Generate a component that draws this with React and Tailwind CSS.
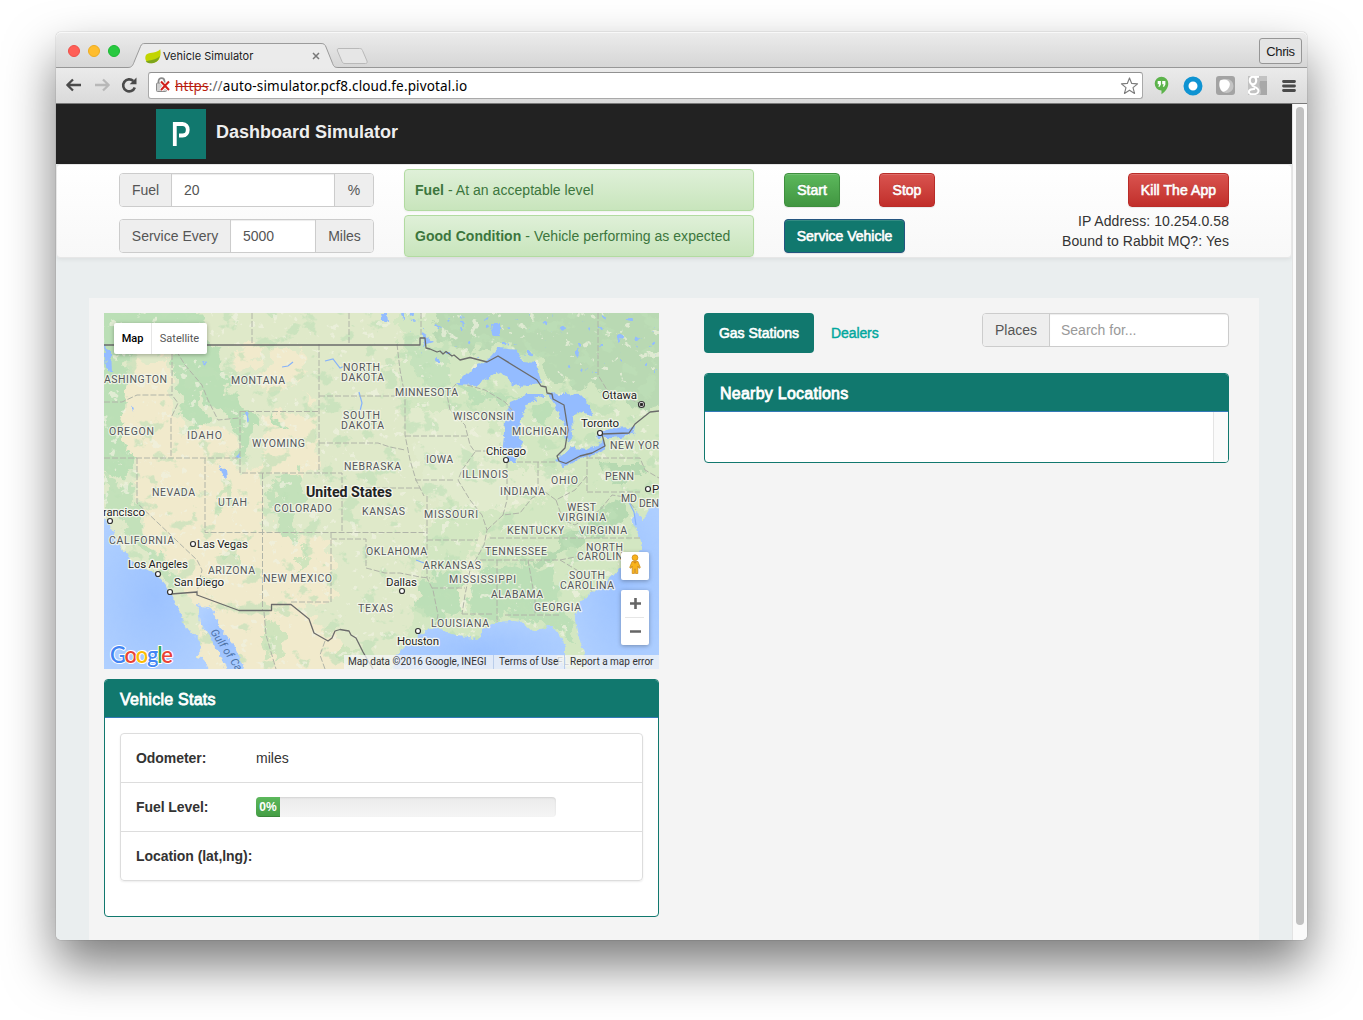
import React from "react";

const STATE_LABELS = [
  ["ASHINGTON", 104, 383, 63], ["MONTANA", 231, 384, 54], ["NORTH", 343, 371, 37], ["DAKOTA", 341, 381, 43],
  ["SOUTH", 343, 419, 37], ["DAKOTA", 341, 429, 43], ["OREGON", 109, 435, 45], ["IDAHO", 187, 439, 35],
  ["WYOMING", 252, 447, 53], ["NEBRASKA", 344, 470, 57], ["NEVADA", 152, 496, 43], ["UTAH", 218, 506, 29],
  ["COLORADO", 274, 512, 58], ["KANSAS", 362, 515, 43], ["CALIFORNIA", 109, 544, 65], ["ARIZONA", 208, 574, 47],
  ["NEW MEXICO", 263, 582, 69], ["OKLAHOMA", 366, 555, 61], ["TEXAS", 358, 612, 35], ["MINNESOTA", 395, 396, 63],
  ["WISCONSIN", 453, 420, 61], ["MICHIGAN", 512, 435, 55], ["IOWA", 426, 463, 27], ["ILLINOIS", 462, 478, 46],
  ["OHIO", 551, 484, 27], ["PENN", 605, 480, 29], ["NEW YOR", 610, 449, 49], ["INDIANA", 500, 495, 45],
  ["MISSOURI", 424, 518, 54], ["WEST", 567, 511, 29], ["VIRGINIA", 558, 521, 48], ["KENTUCKY", 507, 534, 57],
  ["VIRGINIA", 579, 534, 48], ["TENNESSEE", 485, 555, 62], ["NORTH", 586, 551, 37], ["CAROLIN", 577, 560, 46],
  ["ARKANSAS", 423, 569, 58], ["MISSISSIPPI", 449, 583, 67], ["SOUTH", 569, 579, 36], ["CAROLINA", 560, 589, 54],
  ["ALABAMA", 491, 598, 52], ["GEORGIA", 534, 611, 47], ["LOUISIANA", 431, 627, 58], ["MD", 621, 502, 16],
  ["DEN", 639, 507, 20], ["FL", 557, 665, 12],
];

const CITY_LABELS = [
  ["Ottawa", 602, 399, 35], ["Toronto", 581, 427, 38], ["Chicago", 486, 455, 40], ["Dallas", 386, 586, 31],
  ["Houston", 397, 645, 42], ["Las Vegas", 197, 548, 51], ["Los Angeles", 128, 568, 60], ["San Diego", 174, 586, 50],
  ["rancisco", 103, 516, 42], ["P", 652, 493, 7],
];

const CITY_DOTS = [
  [600, 433], [506, 460], [402, 591], [418, 631], [193, 544], [158, 574], [170, 592], [110, 521], [648, 489],
];

const STATE_LINES = [
  "M252 313V344", "M349 313V344", "M172 354V395", "M104 402L122 402L137 395H172L178 403L171 418V458",
  "M104 458H240", "M137 458V503L197 560L202 570L197 592", "M205 458V532.5H427", "M240 411V473H342V532.5",
  "M240 411.500H319", "M319 344V473", "M172 344L185 365L202 385L208 400L218 420L239 418", "M319 396H404",
  "M319 443H378L390 447L405 450", "M262.500 473V610", "M331 532V602H291", "M331 539H366V568L385 573L400 573L420 577L430 578",
  "M397 344L400 370L405 396V435L410 460L416 480L424 496", "M405 436H467", "M456 384L447 395L450 410L465 425L470 445L475 452L462 470L458 480L470 500L482 515L487 530L484 545L470 570L465 595L462 614",
  "M475 451H503", "M507 462V500L503 515", "M538 462V490", "M517 462H555", "M415 480H455", "M427 496V578L433 590L438 615L435 628",
  "M342 488H420", "M427 540H478", "M490 538H640", "M480 560H560L580 556", "M497 560V622", "M528 560L535 600V615", "M505 615H560",
  "M432 588H465", "M462 614H492", "M587 453V492", "M587 458H640L645 470L659 478", "M587 492H640", "M598 313V375L607 390L625 396L640 404",
  "M487 530L503 515L520 513L532 498L545 492L556 500L575 490L587 476", "M556 500L563 520L575 525L600 510L612 495L625 497L636 510",
  "M560 560L580 572L592 592", "M421 313V338", "M467 385L485 390L505 402L512 410", "M264 612L266 635L276 669", "M325 641L320 655L325 669",
];

function MapArt() {
  return (
    <svg viewBox="104 313 555 356" className="block h-[356px] w-[555px]" fontFamily="Roboto, sans-serif">
      <defs>
        <filter id="rough" x="-5%" y="-5%" width="110%" height="110%" colorInterpolationFilters="sRGB">
          <feTurbulence type="fractalNoise" baseFrequency="0.07" numOctaves="4" seed="4" result="n" />
          <feDisplacementMap in="SourceGraphic" in2="n" scale="26" xChannelSelector="R" yChannelSelector="G" />
        </filter>
        <filter id="coast" x="-5%" y="-5%" width="110%" height="110%" colorInterpolationFilters="sRGB">
          <feTurbulence type="fractalNoise" baseFrequency="0.16" numOctaves="3" seed="9" result="n" />
          <feDisplacementMap in="SourceGraphic" in2="n" scale="7" xChannelSelector="R" yChannelSelector="G" />
        </filter>
        <filter id="speckle" x="0" y="0" width="100%" height="100%" colorInterpolationFilters="sRGB">
          <feTurbulence type="fractalNoise" baseFrequency="0.05 0.06" numOctaves="5" seed="12" result="n" />
          <feColorMatrix in="n" type="matrix" values="0 0 0 0 0.75  0 0 0 0 0.88  0 0 0 0 0.72  14 0 0 0 -8.5" result="m" />
          <feComposite in="m" in2="SourceAlpha" operator="in" />
        </filter>
        <filter id="pale" x="0" y="0" width="100%" height="100%" colorInterpolationFilters="sRGB">
          <feTurbulence type="fractalNoise" baseFrequency="0.1" numOctaves="4" seed="31" result="n" />
          <feColorMatrix in="n" type="matrix" values="0 0 0 0 0.94  0 0 0 0 0.95  0 0 0 0 0.88  0 16 0 0 -10.9" result="m" />
          <feComposite in="m" in2="SourceAlpha" operator="in" />
        </filter>
        <filter id="lakes" x="0" y="0" width="100%" height="100%" colorInterpolationFilters="sRGB">
          <feTurbulence type="fractalNoise" baseFrequency="0.12" numOctaves="3" seed="77" result="n" />
          <feColorMatrix in="n" type="matrix" values="0 0 0 0 0.58  0 0 0 0 0.74  0 0 0 0 0.99  0 0 22 0 -16" result="m" />
          <feComposite in="m" in2="SourceAlpha" operator="in" />
        </filter>
        <radialGradient id="ocean" cx="0.5" cy="0.5" r="0.6">
          <stop offset="0" stopColor="#9cc2ff" />
          <stop offset="1" stopColor="#b0d0ff" />
        </radialGradient>
      </defs>
      <rect x="104" y="313" width="555" height="356" fill="#dfe9c9" />
      <g filter="url(#rough)">
        <path fill="#d3e7c2" d="M400 300H680V690H380L420 600L425 540L440 500L400 400Z" />
        <path fill="#e1ebcd" d="M405 410L470 410L500 430V470L560 470L580 470L540 500L500 510L430 500Z" />
        <path fill="#f1eacc" d="M134 362L168 360L172 400L180 432L212 424L236 434L238 478L265 462L262 418L285 412L316 418L318 470L262 478L265 532L332 535L332 600L300 608L345 645L345 690L190 690L200 610L186 585L150 545L138 500L135 460L120 440L122 400Z" />
        <path fill="#f1eacc" d="M230 346L265 344L252 372L234 368ZM268 355L300 348L306 375L295 386L262 390ZM300 392L318 400L308 410Z" />
        <path fill="#bbdfb6" d="M92 300H185L205 320L192 345L140 352L128 365L122 440L140 465L110 480L90 440Z" />
        <path fill="#bbdfb6" d="M175 340L222 345L228 390L248 410L240 425L222 412L210 405L204 385L200 400L205 420L192 432L180 415L185 395L174 375Z" />
        <path fill="#bbdfb6" d="M242 405L256 412L254 440L242 460L238 440ZM272 412L286 422L290 432L278 428Z" />
        <path fill="#c3e1ba" d="M104 475L132 485L138 520L160 560L178 582L172 590L150 562L128 530L106 505Z" />
        <path fill="#c3e1ba" d="M282 475L300 470L306 500L292 515L300 545L288 535L272 515L268 490Z" />
        <path fill="#cfe4bd" d="M222 485L230 490L224 515L216 510ZM225 552L238 560L250 572L236 570ZM266 615L278 622L284 650L276 669L266 640ZM345 645L360 650L352 669L338 660ZM300 545L308 560L300 575Z" />
        <path fill="#b9d9b3" d="M440 300H680V395L650 412L610 400L596 385L575 388L552 380L540 355L500 342L470 352L430 335Z" />
        <path fill="#c5e2bc" d="M400 340L450 350L450 390L420 385Z" />
        <path fill="#bcdfb7" d="M455 385L490 392L520 393L505 405L490 402L470 400ZM532 405L550 408L548 428L535 422Z" />
        <path fill="#bcdfb7" d="M425 575L462 570L464 610L430 622L418 600ZM475 572L520 562L555 575L560 605L535 620L500 615L472 618L470 600Z" />
        <path fill="#bcdfb7" d="M535 618L560 612L575 625L578 645L566 640L550 625Z" />
        <path fill="#b6d9b1" d="M525 562L560 545L600 512L622 498L630 515L600 535L570 550L540 566ZM600 462L640 462L645 478L612 484Z" />
        <path fill="#e3ebcc" d="M475 530L487 535L478 560L470 600L458 615L462 580Z" />
      </g>
      <rect x="104" y="313" width="555" height="356" filter="url(#speckle)" opacity="0.6" />
      <rect x="104" y="313" width="555" height="356" filter="url(#pale)" opacity="0.7" />
      <rect x="405" y="313" width="254" height="60" filter="url(#lakes)" />
      <g filter="url(#coast)" fill="url(#ocean)">
        <path d="M94 514L104 518L113 532L121 547L128 557L142 568L155 573L165 585L171 595L178 608L187 628L200 642L203 648L195 657L203 658L215 680H94Z" />
        <path d="M197 605L207 607L215 613L220 628L233 645L250 680H230L220 655L210 637L200 622Z" />
        <path d="M390 680L397 655L405 647L417 637L430 628L440 628L447 633L467 637L480 638L483 630L493 623L513 622L523 623L533 632L550 625L560 635L565 648L565 658L570 680Z" />
        <path d="M590 680L583 648L577 632L575 618L580 602L593 592L613 575L622 565L637 557L642 548L638 535L633 518L637 510L643 522L647 512L653 502L670 492V680Z" />
      </g>
      <g filter="url(#coast)" fill="#94bcff">
        <path d="M456 384L467 373L490 357L498 348L518 350L523 362L537 363L541 383L527 385L513 387L507 377L497 372L477 385Z" />
        <path d="M547 395L530 402L522 415L518 432L522 445L517 462L508 462L503 445L505 422L510 402L527 395Z" />
        <path d="M547 393L580 395L590 405L593 417L580 412L572 418L573 435L567 442L562 422L555 405Z" />
        <path d="M555 460L573 448L587 450L603 442L605 448L580 460L562 467Z" />
        <path d="M597 435L610 428L635 427L633 435L613 438L598 438Z" />
        <path d="M491 323L500 323V336L492 336ZM104 345L111 352L112 372L106 368ZM219 464L226 470L227 478L222 474ZM380 313H387L388 322L382 320ZM236 457L239 453L240 460ZM203 360L206 362L205 367ZM131 405L134 407L133 412ZM245 411L249 419L248 422L244 415ZM421 332L428 337L434 342L424 345ZM400 312H404V320Z" />
      </g>
      <g fill="none" stroke="#86b2fa" strokeWidth="1.200">
        <path d="M282 367L288 366L293 362M325 361L333 359L340 368L345 366M359 392L362 403L360 411M628 500L634 512L636 525M416 560L424 563" />
      </g>
      <g fill="none" stroke="#b0b4a8" strokeWidth="1" strokeDasharray="6 2">
        {STATE_LINES.map((d) => <path key={d} d={d} />)}
      </g>
      <g fill="none" stroke="#6b6b6b" strokeWidth="1.300" strokeLinejoin="round">
        <path d="M104 345H420V338H425L426 348L430 349L437 352L440 351L443 354L446 351.500L452 356L454 355L460 360L470 357.500L487 362L498 356L537 380L541 386L546 387L547 393L552 394L553 399L564 405L568 430L565 448L557 456L559 461L566 463.500L580 456L592 453L605 446L602 434L629 433L635 424L650 412L659 411" />
        <path d="M171 594L197 592V595L239 610.500H271.500V604.500H291L309 619L314 633L328 641L332 638L335 631L340 629.500L349 631L351 635L356 638L363 652L373 669" />
      </g>
      <g fontSize="10.500" fill="#55575a" stroke="#f4f6ec" strokeOpacity="0.85" strokeWidth="2.400" strokeLinejoin="round" paintOrder="stroke">
        {STATE_LABELS.map(([t, x, y, w]) => (
          <text key={t + x + y} x={x} y={y} textLength={w}>{t}</text>
        ))}
      </g>
      <g fill="#fff" stroke="#333" strokeWidth="1.200">
        {CITY_DOTS.map(([x, y]) => <circle key={x} cx={x} cy={y} r="2.500" />)}
        <circle cx="641.500" cy="404.500" r="3" />
        <circle cx="641.500" cy="404.500" r="1.200" fill="#222" />
      </g>
      <g fontSize="11.500" fill="#222" stroke="#f7f8f0" strokeOpacity="0.9" strokeWidth="2.600" strokeLinejoin="round" paintOrder="stroke">
        {CITY_LABELS.map(([t, x, y, w]) => (
          <text key={t} x={x} y={y} textLength={w}>{t}</text>
        ))}
        <text x="306" y="497" fontSize="14" fontWeight="700" textLength="86" lengthAdjust="spacingAndGlyphs">United States</text>
      </g>
      <text transform="translate(210 632) rotate(56)" fontSize="11" fill="#4f74a8" fontStyle="italic" textLength="48">Gulf of Ca</text>
      <text x="110" y="662.500" fontSize="22" fontFamily="Lato, sans-serif" fontWeight="600" textLength="63" stroke="#fff" strokeWidth="2" strokeLinejoin="round" paintOrder="stroke">
        <tspan fill="#4285f4">G</tspan><tspan fill="#ea4335">o</tspan><tspan fill="#fbbc05">o</tspan><tspan fill="#4285f4">g</tspan><tspan fill="#34a853">l</tspan><tspan fill="#ea4335">e</tspan>
      </text>
    </svg>
  );
}

function MapPanel() {
  return (
    <div className="relative h-[356px] w-[555px] overflow-hidden font-[Roboto,sans-serif]">
      <MapArt />
      <div className="absolute left-[10px] top-[10px] flex h-[31px] w-[93px] items-center rounded-[2px] bg-white text-[11px] shadow-[0_1px_4px_rgba(0,0,0,0.3)]">
        <div className="flex h-full w-[38px] items-center justify-center border-r border-[#e6e6e6] font-medium text-black">Map</div>
        <div className="flex-1 text-center text-[#565656]">Satellite</div>
      </div>
      <div className="absolute right-[10px] top-[239px] flex h-7 w-7 items-center justify-center rounded-[2px] bg-white shadow-[0_1px_4px_rgba(0,0,0,0.3)]">
        <svg viewBox="0 0 12 21" className="-mt-[3px] h-[21px] w-3">
          <g fill="#f9b31b" stroke="#c98411" strokeWidth="0.700" strokeLinejoin="round">
            <path d="M3 7.500H9L11.300 13.500L10 14.300L8.800 12V19.500H6.500V15H5.500V19.500H3.200V12L2 14.300L.7 13.500Z" />
            <circle cx="6" cy="3.700" r="2.900" />
          </g>
          <path d="M4 7.700H8L6 9.700Z" fill="#d98a10" />
        </svg>
      </div>
      <div className="absolute right-[10px] top-[277px] flex h-[55px] w-7 flex-col items-center rounded-[2px] bg-white shadow-[0_1px_4px_rgba(0,0,0,0.3)]">
        <svg viewBox="0 0 28 55" className="h-[55px] w-7">
          <path d="M9 13.500H20M14.500 8V19M9 41.500H20" stroke="#666" strokeWidth="2.600" />
          <path d="M4 27.500H23" stroke="#e6e6e6" />
        </svg>
      </div>
      <div className="absolute bottom-0 right-0 flex h-[14px] w-[315px] items-center whitespace-nowrap bg-[#f5f5f5]/75 text-[10px] text-[#333]">
        <span className="w-[149px] pl-1">Map data ©2016 Google, INEGI</span>
        <span className="h-full w-[71px] border-l border-[#b9cdea] pl-[5px]">Terms of Use</span>
        <span className="h-full border-l border-[#b9cdea] pl-[5px]">Report a map error</span>
      </div>
    </div>
  );
}

function SpringLeaf() {
  return (
    <svg viewBox="0 0 16 15" className="h-[15px] w-4">
      <path d="M15.200.3C16.300 5 15.500 13.500 7.500 14.100C3 14.500.3 12.500.3 8.800C.5 4 4 4 8.500 3.400C11.500 3 13.700 2.200 15.200.3Z" fill="#c2d500" />
      <path d="M.8 12.200C5 11.300 10.500 11.300 14.800 7C13.700 11.500 10.800 14 7.300 14.200C4 14.500 2 13.800.8 12.200Z" fill="#7da51c" />
    </svg>
  );
}

function TitleBar() {
  return (
    <div className="relative flex h-9 items-start rounded-t-[5px] border-b border-[#979797] bg-linear-to-b from-[#ececec] to-[#d6d6d6] shadow-[inset_0_1px_0_#f8f8f8]">
      <div className="ml-3 mt-[13px] flex gap-2">
        <i className="h-3 w-3 rounded-full border border-[#ee5049] bg-[#ff5f57]" />
        <i className="h-3 w-3 rounded-full border border-[#edac20] bg-[#ffbd2e]" />
        <i className="h-3 w-3 rounded-full border border-[#1bb932] bg-[#28c940]" />
      </div>
      <div className="relative ml-2 mt-[11px] h-[25px] w-[212px]">
        <svg viewBox="0 0 212 25" className="absolute left-0 top-0 h-[25px] w-[212px]">
          <path d="M0 24.500C4 24.500 5 22 6.500 18L12.500 3.500C13.500 1 14.500.5 17 .5H193C196 .5 197 1.500 198 4L204 19C205.500 23 206 24.500 210 24.500V25H0Z" fill="#ebebeb" />
          <path d="M0 24.500C4 24.500 5 22 6.500 18L12.500 3.500C13.500 1 14.500.5 17 .5H193C196 .5 197 1.500 198 4L204 19C205.500 23 206 24.500 210 24.500" fill="none" stroke="#9b9b9b" />
        </svg>
        <div className="relative flex h-[26px] items-center pl-[17px]">
          <SpringLeaf />
          <span className="ml-[2px] whitespace-nowrap font-[Inter,sans-serif] text-[11px] tracking-[0.002em] text-[#1b1b1b]">Vehicle Simulator</span>
          <svg viewBox="0 0 8 8" className="absolute left-[184px] top-[9px] h-2 w-2"><path d="M1 1L7 7M7 1L1 7" stroke="#777" strokeWidth="1.500" /></svg>
        </div>
      </div>
      <svg viewBox="0 0 34 18" className="-ml-[5px] mt-[15px] h-[18px] w-[34px]">
        <path d="M4 1.500H24.500C26 1.500 27 2 27.500 3.500L32 14C32.500 15.500 32 16.500 30.500 16.500H10C8.500 16.500 7.500 16 7 14.500L2.500 4C2 2.500 2.300 1.500 4 1.500Z" fill="#e6e6e6" stroke="#b9b9b9" />
      </svg>
      <div className="ml-auto mr-[5px] mt-[6px] flex h-[26px] w-[43px] items-center justify-center rounded-[3px] border border-[#969696] bg-[#e4e4e4] pt-px font-['Liberation_Sans',sans-serif] text-[13px] tracking-[-0.03em] text-[#1a1a1a]">Chris</div>
    </div>
  );
}

function AddressBar() {
  return (
    <div className="flex h-9 items-center border-b border-[#7a7a7a] bg-linear-to-b from-[#ebebeb] to-[#dadada] pl-[9px] pr-[11px]">
      <svg viewBox="0 0 18 16" className="-mt-px h-4 w-[18px]"><path d="M8 2.500L2.300 8L8 13.500M2.500 8H16" fill="none" stroke="#4a4a4a" strokeWidth="2.300" strokeLinejoin="round" /></svg>
      <svg viewBox="0 0 18 16" className="-mt-px ml-[10px] h-4 w-[18px]"><path d="M10 2.500L15.700 8L10 13.500M15.500 8H2" fill="none" stroke="#b8b8b8" strokeWidth="2.300" strokeLinejoin="round" /></svg>
      <svg viewBox="0 0 18 18" className="-mt-px ml-[9px] h-[18px] w-[18px]">
        <path d="M14.800 11.500A6 6 0 1 1 13.300 5" fill="none" stroke="#4a4a4a" strokeWidth="2.600" />
        <path d="M16.500 1.500V8.300H9.700Z" fill="#4a4a4a" />
      </svg>
      <div className="ml-[10px] flex h-[27px] w-[995px] shrink-0 items-center rounded-[3px] border border-[#a9a9a9] border-t-[#919191] bg-white pl-[6px] pr-[3px]">
        <svg viewBox="0 0 16 18" className="-mt-px h-[18px] w-4">
          <path d="M3.500 8V5.500C3.500 1 9.500 1 9.500 5.500V8" fill="none" stroke="#8a8a8a" strokeWidth="1.800" />
          <rect x="1.500" y="7" width="10" height="8.500" rx="1" fill="#cfcfcf" stroke="#8a8a8a" />
          <path d="M6 5.500L14 14M14 5.500L6 14" stroke="#fff" strokeWidth="4" />
          <path d="M6 5.500L14 14M14 5.500L6 14" stroke="#d0201b" strokeWidth="2" />
        </svg>
        <span className="ml-[4px] mt-px whitespace-nowrap font-['Noto_Sans',sans-serif] text-[13.5px] tracking-[0.155px] text-black">
          <span className="text-[#b81d0f] line-through">https</span><span className="text-[#666]">://</span>auto-simulator.pcf8.cloud.fe.pivotal.io
        </span>
        <svg viewBox="0 0 20 20" className="ml-auto h-5 w-[19px]">
          <path d="M10 1.500L12.300 7.300L18.500 7.700L13.700 11.700L15.300 17.800L10 14.400L4.700 17.800L6.300 11.700L1.500 7.700L7.700 7.300Z" fill="#fff" stroke="#7c7c7c" strokeWidth="1.200" strokeLinejoin="round" />
        </svg>
      </div>
      <svg viewBox="0 0 15 19" className="ml-[11px] h-[19px] w-[15px]">
        <path d="M7.500.8A6.800 6.800 0 0 1 14.300 7.600C14.300 12 11 16 7.500 18.300V14.400A6.800 6.800 0 1 1 7.500.8Z" fill="#5cb34b" />
        <path d="M3.700 5H6.900V8.400L5.600 10.700H4.300L5.200 8.300H3.700ZM8.200 5H11.400V8.400L10.100 10.700H8.800L9.700 8.300H8.200Z" fill="#fff" />
      </svg>
      <svg viewBox="0 0 20 20" className="ml-[14px] h-5 w-5"><circle cx="10" cy="10" r="7" fill="#fff" stroke="#0e93d2" strokeWidth="5" /></svg>
      <svg viewBox="0 0 19 19" className="ml-[13px] h-[19px] w-[19px]">
        <rect width="19" height="19" rx="3" fill="#a3a3a3" />
        <circle cx="10.500" cy="10" r="7" fill="#c4c4c4" />
        <path d="M4 4.500C8 2.500 13 4 13.800 7.500C14.300 11 11 15.500 7 15.800C4 14 2.300 9 4 4.500Z" fill="#fff" />
      </svg>
      <svg viewBox="0 0 19 19" className="ml-[13px] h-[19px] w-[19px]">
        <rect width="19" height="19" fill="#c2c2c2" />
        <path d="M12 5H19V19H12C15 15 10 11 12 5Z" fill="#a8a8a8" />
        <ellipse cx="5" cy="4.500" rx="3.200" ry="3.900" fill="none" stroke="#fff" strokeWidth="2.200" />
        <path d="M5 8.500C2 11 11 10.500 10.500 15C10 19 1 19.500 .8 16C.8 13.500 4 12.800 7 13M7 1L11 .8" fill="none" stroke="#fff" strokeWidth="2" />
      </svg>
      <svg viewBox="0 0 14 14" className="ml-auto h-[14px] w-[14px]"><path d="M1.500 2.500H12.500M1.500 7H12.500M1.500 11.500H12.500" stroke="#4a4a4a" strokeWidth="2.800" strokeLinecap="round" /></svg>
    </div>
  );
}

function Field({ label, value, unit, labelClass, unitClass }) {
  return (
    <div className="flex h-[34px] w-[255px] overflow-hidden rounded-[4px] border border-[#ccc] bg-white text-[#555]">
      <span className={"flex items-center justify-center border-r border-[#ccc] bg-[#eee] " + labelClass}>{label}</span>
      <span className="flex flex-1 items-center pl-3 shadow-[inset_0_1px_1px_rgba(0,0,0,0.075)]">{value}</span>
      <span className={"flex items-center justify-center border-l border-[#ccc] bg-[#eee] " + unitClass}>{unit}</span>
    </div>
  );
}

function Alert({ title, children }) {
  return (
    <div className="flex h-[42px] w-[350px] items-center whitespace-pre rounded-[4px] border border-[#b2dba1] bg-linear-to-b from-[#dff0d8] to-[#c8e5bc] pl-[10px] tracking-[0.04px] text-[#3c763d] shadow-[0_1px_2px_rgba(0,0,0,0.05)]">
      <b>{title}</b> - {children}
    </div>
  );
}

const button =
  "flex h-[34px] items-center justify-center whitespace-nowrap rounded-[4px] border text-white [-webkit-text-stroke:0.6px_white] [text-shadow:0_-1px_0_rgba(0,0,0,0.2)] shadow-[inset_0_1px_0_rgba(255,255,255,0.15),0_1px_1px_rgba(0,0,0,0.075)] ";
const danger = "border-[#b92c28] bg-linear-to-b from-[#d9534f] to-[#c12e2a] ";

function ControlPanel() {
  return (
    <div className="flex h-[94px] items-start rounded-[4px] border border-[#e7e7e7] bg-linear-to-b from-white to-[#f8f8f8] pl-[62px] pr-[62px] shadow-[0_1px_5px_rgba(0,0,0,0.075)]">
      <div className="mt-2 flex flex-col gap-3">
        <Field label="Fuel" value="20" unit="%" labelClass="w-[52px]" unitClass="w-[39px]" />
        <Field label="Service Every" value="5000" unit="Miles" labelClass="w-[111px]" unitClass="w-[58px]" />
      </div>
      <div className="ml-[30px] mt-1 flex flex-col gap-1">
        <Alert title="Fuel">At an acceptable level</Alert>
        <Alert title="Good Condition">Vehicle performing as expected</Alert>
      </div>
      <div className="ml-[30px] mt-2 flex flex-col gap-3">
        <div className="flex gap-[39px]">
          <div className={button + "w-[56px] border-[#3e8f3e] bg-linear-to-b from-[#5cb85c] to-[#419641]"}>Start</div>
          <div className={button + danger + "w-[56px]"}>Stop</div>
        </div>
        <div className={button + "w-[121px] border-[#245580] bg-[#11786e]"}>Service Vehicle</div>
      </div>
      <div className="ml-auto mt-2 flex flex-col items-end leading-5 tracking-[0.08px] text-[#333]">
        <div className={button + danger + "mb-1 w-[101px]"}>Kill The App</div>
        <div>IP Address: 10.254.0.58</div>
        <div>Bound to Rabbit MQ?: Yes</div>
      </div>
    </div>
  );
}

function PanelHeading({ children }) {
  return (
    <div className="flex h-[38px] items-center border-b border-[#337ab7] bg-[#11786e] pl-[15px] pt-[3px] text-base tracking-[0.25px] text-white [-webkit-text-stroke:0.8px_white]">
      {children}
    </div>
  );
}

function StatRow({ label, children }) {
  return (
    <div className="flex h-[49px] items-center border-b border-[#ddd] pl-[15px] last:h-12 last:border-b-0">
      <b className="w-[120px] whitespace-nowrap tracking-[-0.06px]">{label}</b>
      {children}
    </div>
  );
}

function VehicleStats() {
  return (
    <div className="mt-[10px] h-[238px] overflow-hidden rounded-[4px] border border-[#11786e] bg-white">
      <PanelHeading>Vehicle Stats</PanelHeading>
      <div className="mx-[15px] mt-[15px] h-[148px] rounded-[4px] border border-[#ddd] shadow-[0_1px_2px_rgba(0,0,0,0.075)]">
        <StatRow label="Odometer:">miles</StatRow>
        <StatRow label="Fuel Level:">
          <div className="h-5 w-[300px] overflow-hidden rounded-[4px] bg-linear-to-b from-[#ebebeb] to-[#f5f5f5] shadow-[inset_0_1px_2px_rgba(0,0,0,0.1)]">
            <div className="flex h-5 w-6 items-center justify-center bg-linear-to-b from-[#5cb85c] to-[#449d44] text-xs font-bold text-white shadow-[inset_0_-1px_0_rgba(0,0,0,0.15)]">0%</div>
          </div>
        </StatRow>
        <StatRow label="Location (lat,lng):" />
      </div>
    </div>
  );
}

function Locations() {
  return (
    <div className="w-[525px]">
      <div className="flex h-10">
        <div className="flex w-[110px] items-center justify-center rounded-[4px] bg-[#11786e] text-white [-webkit-text-stroke:0.6px_white]">Gas Stations</div>
        <div className="ml-[17px] flex items-center tracking-[-0.1px] text-[#00a79d] [-webkit-text-stroke:0.4px_#00a79d]">Dealers</div>
        <div className="ml-auto flex h-[34px] w-[247px] overflow-hidden rounded-[4px] border border-[#ccc] bg-white">
          <span className="flex w-[67px] items-center justify-center border-r border-[#ccc] bg-[#eee] text-[#555]">Places</span>
          <span className="flex flex-1 items-center pl-[11px] text-[#999] shadow-[inset_0_1px_1px_rgba(0,0,0,0.075)]">Search for...</span>
        </div>
      </div>
      <div className="mt-5 h-[90px] overflow-hidden rounded-[4px] border border-[#11786e] bg-white">
        <PanelHeading>Nearby Locations</PanelHeading>
        <div className="ml-auto h-[50px] w-[15px] border-l border-[#e4e4e4] bg-[#fafafa]" />
      </div>
    </div>
  );
}

function PivotalHeader() {
  return (
    <div className="flex h-[60px] items-start bg-[#222] pl-[100px] pt-[5px]">
      <div className="flex h-[50px] w-[50px] items-center justify-center bg-[#11786e]">
        <svg viewBox="0 0 50 50" className="h-[50px] w-[50px]">
          <path d="M18.800 37V15H26.500C33.500 15 33.500 26.500 26.500 26.500H23" fill="none" stroke="#fff" strokeWidth="3.800" />
        </svg>
      </div>
      <h1 className="ml-[10px] mt-[10px] text-[18px] font-bold leading-[27px] text-[#eee]">Dashboard Simulator</h1>
    </div>
  );
}

export default function App() {
  return (
    <div className="h-[1020px] w-[1363px] overflow-hidden bg-white pl-[56px] pt-8">
      <div className="w-[1251px] rounded-[5px] shadow-[0_0_1px_rgba(0,0,0,0.6),0_25px_50px_rgba(0,0,0,0.52)]">
        <TitleBar />
        <AddressBar />
        <div className="flex h-[836px] overflow-hidden rounded-b-[5px] bg-[#eaeeef] font-['Liberation_Sans',sans-serif] text-sm text-[#333]">
          <div className="w-[1236px]">
            <PivotalHeader />
            <ControlPanel />
            <div className="ml-[33px] mt-10 flex h-[642px] w-[1170px] bg-[#f4f4f4] pl-[15px] pt-[15px]">
              <div className="mr-[45px] w-[555px]">
                <MapPanel />
                <VehicleStats />
              </div>
              <Locations />
            </div>
          </div>
          <div className="w-[15px] border-l border-[#e3e3e3] bg-[#fafafa] pl-[3px] pt-[3px]">
            <div className="h-[818px] w-2 rounded-full bg-[#c1c1c1]" />
          </div>
        </div>
      </div>
    </div>
  );
}
